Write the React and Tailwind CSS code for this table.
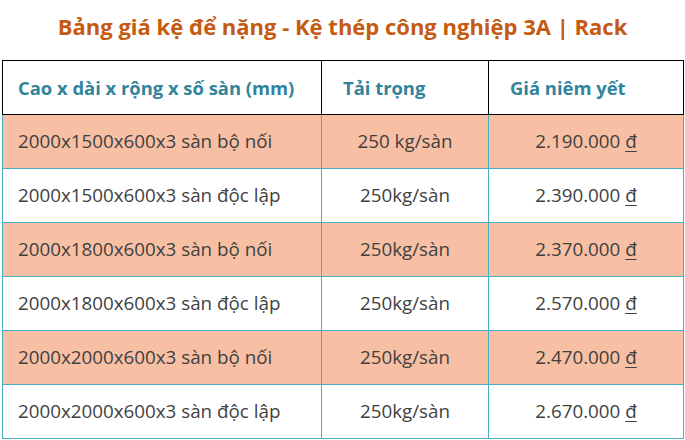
import React from 'react';

const rows = [
  { size: '2000x1500x600x3 sàn bộ nối', load: '250 kg/sàn', price: '2.190.000', hl: true },
  { size: '2000x1500x600x3 sàn độc lập', load: '250kg/sàn', price: '2.390.000', hl: false },
  { size: '2000x1800x600x3 sàn bộ nối', load: '250kg/sàn', price: '2.370.000', hl: true },
  { size: '2000x1800x600x3 sàn độc lập', load: '250kg/sàn', price: '2.570.000', hl: false },
  { size: '2000x2000x600x3 sàn bộ nối', load: '250kg/sàn', price: '2.470.000', hl: true },
  { size: '2000x2000x600x3 sàn độc lập', load: '250kg/sàn', price: '2.670.000', hl: false },
];

export default function App() {
  return (
    <div className="w-[685px] h-[440px] bg-white overflow-hidden font-['Open_Sans',sans-serif]">
      {/* title */}
      <div className="h-[60px] flex items-center justify-center pb-[8px]">
        <h1 className="text-[22px] font-bold text-[#c55a11]">
          Bảng giá kệ để nặng - Kệ thép công nghiệp 3A | Rack
        </h1>
      </div>

      <div className="ml-[2px] w-[682px]">
        {/* header */}
        <div className="flex h-[55px] border border-black text-[18.4px] font-bold text-[#31849b]">
          <div className="w-[319px] border-r border-black flex items-center pl-[15px]">
            Cao x dài x rộng x số sàn (mm)
          </div>
          <div className="w-[167px] border-r border-black flex items-center pl-[21px]">
            Tải trọng
          </div>
          <div className="flex-1 flex items-center pl-[21px]">Giá niêm yết</div>
        </div>

        {/* body */}
        {rows.map((r, i) => (
          <div
            key={i}
            className={`flex h-[54px] border-x border-b border-[#4bacc6] text-[18.8px] text-[#3f3f3f] ${
              r.hl ? 'bg-[#f7bfa4]' : 'bg-white'
            }`}
          >
            <div className="w-[319px] border-r border-[#4bacc6] flex items-center pl-[15px]">
              {r.size}
            </div>
            <div className="w-[167px] border-r border-[#4bacc6] flex items-center justify-center">
              {r.load}
            </div>
            <div className="flex-1 flex items-center justify-center">
              {r.price}&nbsp;<span className="underline underline-offset-[3px]">đ</span>
            </div>
          </div>
        ))}
      </div>
    </div>
  );
}
